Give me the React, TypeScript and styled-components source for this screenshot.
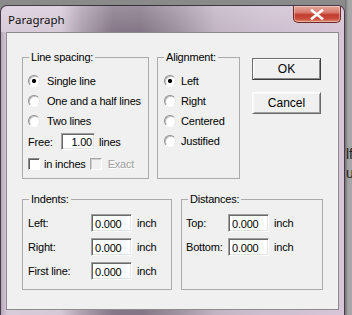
import React from "react";
import { createGlobalStyle, styled } from "styled-components";

const GlobalStyle = createGlobalStyle`
  html, body {
    margin: 0;
    padding: 0;
    background: #9c9c9c;
    overflow: hidden;
  }
`;

type TRadioProps = {
  label: string;
  checked?: boolean;
  gap: number;
};
const Radio = ({ label, checked, gap }: TRadioProps) => {
  return (
    <RadioRow $gap={gap}>
      <RadioCircle $checked={checked} />
      <span>{label}</span>
    </RadioRow>
  );
};

type TFieldProps = {
  label: string;
  value: string;
  labelWidth: number;
};
const MeasureField = ({ label, value, labelWidth }: TFieldProps) => {
  return (
    <FieldRow>
      <FieldLabel $width={labelWidth}>{label}</FieldLabel>
      <TextBox $width={41} defaultValue={value} />
      <Unit>inch</Unit>
    </FieldRow>
  );
};

const App = () => {
  return (
    <>
      <GlobalStyle />
      <Desktop>
        <Window>
          <TitleBar>
            <Title>Paragraph</Title>
            <CloseButton>
              <svg width="14" height="11" viewBox="0 0 14 11">
                <path
                  d="M2 1.5 L12 9.5 M12 1.5 L2 9.5"
                  stroke="#ffffff"
                  strokeWidth="2.6"
                  strokeLinecap="square"
                />
              </svg>
            </CloseButton>
          </TitleBar>

          <FrameBody>
            <Client>
              <TopRow>
                <Group $width={127} $height={128}>
                  <Legend>Line spacing:</Legend>
                  <GroupContent $padTop={7} $padLeft={5}>
                    <Radio label="Single line" checked gap={7} />
                    <Radio label="One and a half lines" gap={7} />
                    <Radio label="Two lines" gap={7} />
                    <FreeRow>
                      <span>Free:</span>
                      <TextBox $width={34} $height={17} $align="right" defaultValue="1.00" />
                      <span>lines</span>
                    </FreeRow>
                    <CheckRow>
                      <CheckBox />
                      <span>in inches</span>
                      <CheckBox $disabled />
                      <DisabledText>Exact</DisabledText>
                    </CheckRow>
                  </GroupContent>
                </Group>

                <Group $width={83} $height={128} $ml={8}>
                  <Legend>Alignment:</Legend>
                  <GroupContent $padTop={7} $padLeft={6}>
                    <Radio label="Left" checked gap={5} />
                    <Radio label="Right" gap={5} />
                    <Radio label="Centered" gap={5} />
                    <Radio label="Justified" gap={5} />
                  </GroupContent>
                </Group>

                <ButtonColumn>
                  <PushButton $default>OK</PushButton>
                  <PushButton>Cancel</PushButton>
                </ButtonColumn>
              </TopRow>

              <BottomRow>
                <Group $width={150} $height={97}>
                  <Legend>Indents:</Legend>
                  <GroupContent $padTop={5} $padLeft={5}>
                    <MeasureField label="Left:" value="0.000" labelWidth={63} />
                    <MeasureField label="Right:" value="0.000" labelWidth={63} />
                    <MeasureField label="First line:" value="0.000" labelWidth={63} />
                  </GroupContent>
                </Group>

                <Group $width={142} $height={97} $ml={9}>
                  <Legend>Distances:</Legend>
                  <GroupContent $padTop={5} $padLeft={4}>
                    <MeasureField label="Top:" value="0.000" labelWidth={42} />
                    <MeasureField label="Bottom:" value="0.000" labelWidth={42} />
                  </GroupContent>
                </Group>
              </BottomRow>
            </Client>
          </FrameBody>
        </Window>

        <BehindStrip>
          <BehindText>lf</BehindText>
          <BehindText>u</BehindText>
        </BehindStrip>
      </Desktop>
    </>
  );
};

export default App;

const Desktop = styled.div`
  display: flex;
  width: 352px;
  height: 315px;
  overflow: hidden;
  background: #8a8a8a;
`;

const Window = styled.div`
  flex: none;
  box-sizing: border-box;
  width: 345px;
  height: 320px;
  margin-top: 5px;
  display: flex;
  flex-direction: column;
  border: 1px solid rgba(45, 35, 50, 0.85);
  border-bottom: none;
  border-radius: 7px 7px 0 0;
  background:
    linear-gradient(
      to right,
      #d9ccda 0px,
      #d6c9d7 60px,
      #b0a2b1 80px,
      #857787 112px,
      #847686 140px,
      #a093a1 178px,
      #c2b4c3 215px,
      #cdbecf 260px,
      #d6c6d7 343px
    );
`;

const TitleBar = styled.div`
  height: 26px;
  display: flex;
  align-items: flex-start;
  justify-content: space-between;
  background: linear-gradient(to bottom, rgba(255, 255, 255, 0.18), rgba(255, 255, 255, 0));
  border-radius: 6px 6px 0 0;
`;

const Title = styled.span`
  margin: 6px 0 0 7px;
  font-family: "Noto Sans", "Liberation Sans", sans-serif;
  font-size: 11.5px;
  line-height: 16px;
  color: #101010;
`;

const CloseButton = styled.div`
  width: 48px;
  height: 17px;
  margin-right: 3px;
  display: flex;
  align-items: center;
  justify-content: center;
  box-sizing: border-box;
  border: 1px solid #6b2a2a;
  border-top: none;
  border-radius: 0 0 5px 5px;
  background: linear-gradient(
    to bottom,
    #e6a99f 0%,
    #d87a6c 40%,
    #c33d2f 55%,
    #c94d3c 80%,
    #e08f73 100%
  );
  box-shadow: inset 0 0 0 1px rgba(255, 220, 210, 0.45);
`;

const FrameBody = styled.div`
  flex: 1;
  padding: 0 4px 0 5px;
  background: linear-gradient(
    to right,
    rgba(120, 95, 125, 0.35) 0px,
    rgba(205, 190, 208, 0) 6px
  );
`;

const Client = styled.div`
  box-sizing: border-box;
  width: 333px;
  height: 278px;
  padding: 18px 0 0 15px;
  border: 1px solid #8e8a90;
  background: #f0f0f0;
  font-family: "Liberation Sans", Arial, sans-serif;
  font-size: 11px;
  color: #000;
  letter-spacing: -0.2px;
`;

const TopRow = styled.div`
  display: flex;
  align-items: flex-start;
`;

const BottomRow = styled.div`
  display: flex;
  align-items: flex-start;
  margin-top: 14px;
`;

const Group = styled.fieldset<{ $width: number; $height: number; $ml?: number }>`
  box-sizing: border-box;
  width: ${(p) => p.$width}px;
  height: ${(p) => p.$height}px;
  margin: 0 0 0 ${(p) => p.$ml ?? 0}px;
  padding: 0;
  border: 1px solid #ababab;
  min-width: 0;
`;

const Legend = styled.legend`
  margin-left: 6px;
  padding: 0 2px;
  line-height: 13px;
  font-size: 11px;
`;

const GroupContent = styled.div<{ $padTop: number; $padLeft: number }>`
  display: flex;
  flex-direction: column;
  padding: ${(p) => p.$padTop}px 0 0 ${(p) => p.$padLeft}px;
`;

const RadioRow = styled.label<{ $gap: number }>`
  display: flex;
  align-items: center;
  gap: ${(p) => p.$gap}px;
  height: 20px;
  white-space: nowrap;
`;

const RadioCircle = styled.span<{ $checked?: boolean }>`
  flex: none;
  box-sizing: border-box;
  width: 12px;
  height: 12px;
  border-radius: 50%;
  border: 1px solid;
  border-color: #8c8c8c #e6e6e6 #ffffff #8c8c8c;
  box-shadow: inset 1px 1px 0 #c4c4c4;
  background: ${(p) =>
    p.$checked
      ? "radial-gradient(circle at 50% 50%, #000 0 1.8px, #fff 2.4px)"
      : "#fff"};
`;

const FreeRow = styled.div`
  display: flex;
  align-items: center;
  height: 21px;
  & > span:first-child {
    width: 33px;
  }
  & > span:last-child {
    margin-left: 4px;
  }
`;

const CheckRow = styled.div`
  display: flex;
  align-items: center;
  height: 24px;
  white-space: nowrap;
`;

const CheckBox = styled.span<{ $disabled?: boolean }>`
  flex: none;
  box-sizing: border-box;
  width: 12px;
  height: 12px;
  margin-left: ${(p) => (p.$disabled ? 4 : 0)}px;
  margin-right: ${(p) => (p.$disabled ? 6 : 4)}px;
  border: 1px solid;
  border-color: ${(p) =>
    p.$disabled ? "#a6a6a6 #ffffff #ffffff #a6a6a6" : "#8c8c8c #ffffff #ffffff #8c8c8c"};
  box-shadow: ${(p) =>
    p.$disabled ? "inset 1px 1px 0 #d0d0d0" : "inset 1px 1px 0 #5e5e5e"};
  background: ${(p) => (p.$disabled ? "#f0f0f0" : "#fff")};
`;

const DisabledText = styled.span`
  color: #a0a0a0;
  text-shadow: 1px 1px 0 #fff;
`;

const TextBox = styled.input<{ $width: number; $height?: number; $align?: string }>`
  box-sizing: border-box;
  width: ${(p) => p.$width}px;
  height: ${(p) => p.$height ?? 18}px;
  margin: 0;
  padding: 1px 2px 0 3px;
  border: 1px solid;
  border-color: #a0a0a0 #ffffff #ffffff #a0a0a0;
  box-shadow: inset 1px 1px 0 #696969, inset -1px -1px 0 #e3e3e3;
  background: #fff;
  font-family: "Liberation Sans", Arial, sans-serif;
  font-size: 11px;
  letter-spacing: -0.2px;
  color: #000;
  text-align: ${(p) => p.$align ?? "left"};
  outline: none;
`;

const FieldRow = styled.div`
  display: flex;
  align-items: center;
  height: 24px;
`;

const FieldLabel = styled.span<{ $width: number }>`
  width: ${(p) => p.$width}px;
  white-space: nowrap;
`;

const Unit = styled.span`
  margin-left: 5px;
`;

const ButtonColumn = styled.div`
  display: flex;
  flex-direction: column;
  gap: 12px;
  margin: 7px 0 0 12px;
`;

const PushButton = styled.button<{ $default?: boolean }>`
  box-sizing: border-box;
  width: 69px;
  height: 22px;
  padding: 0;
  border: 1px solid;
  border-color: ${(p) =>
    p.$default ? "#6e6e6e #3c3c3c #3c3c3c #6e6e6e" : "#ffffff #6a6a6a #6a6a6a #ffffff"};
  box-shadow: ${(p) =>
    p.$default
      ? "inset 1px 1px 0 #ffffff, inset -1px -1px 0 #8a8a8a"
      : "inset 1px 1px 0 #f8f8f8, inset -1px -1px 0 #a0a0a0"};
  background: #f0f0f0;
  font-family: "Liberation Sans", Arial, sans-serif;
  font-size: 12px;
  color: #000;
`;

const BehindStrip = styled.div`
  flex: 1;
  display: flex;
  flex-direction: column;
  padding-top: 145px;
  background: linear-gradient(to right, #707070 0px, #a4a4a4 3px, #a8a8a8 7px);
`;

const BehindText = styled.span`
  margin-left: 1px;
  font-family: "Liberation Sans", Arial, sans-serif;
  font-size: 14px;
  line-height: 19px;
  color: #1e1e1e;
`;
